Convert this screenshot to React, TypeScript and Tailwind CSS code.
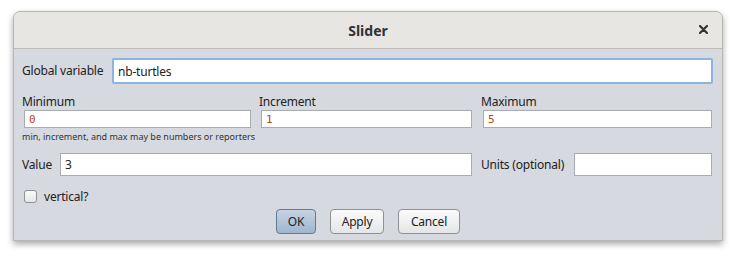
export default function App() {
  const font = { fontFamily: '"Noto Sans", "Open Sans", sans-serif' }
  const mono = '[font-family:"DejaVu_Sans_Mono",monospace]'

  return (
    <div className="w-[737px] h-[258px] bg-white pt-[11px] pl-[13px] text-[#2e3436]" style={font}>
      <div className="w-[710px] h-[230px] flex flex-col rounded-t-[7px] overflow-hidden border border-[#b6b6b3] shadow-[0_3px_6px_rgba(0,0,0,0.35)] bg-[#d6d9df]">
        {/* title bar */}
        <div className="h-[37px] shrink-0 flex items-center justify-center relative bg-[#e8e6e3] border-b border-[#c0bdb8]">
          <span className="text-[14px] font-bold text-[#2e3436]">Slider</span>
          <svg className="absolute right-[14px] top-[13px]" width="9" height="9" viewBox="0 0 9 9">
            <path d="M1 1 L8 8 M8 1 L1 8" stroke="#2e3436" strokeWidth="2.2" strokeLinecap="round" />
          </svg>
        </div>

        {/* body */}
        <div className="flex-1 flex flex-col pl-[8px] pr-[9px] text-[12px] tracking-[-0.2px] text-[#222] whitespace-nowrap">
          <div className="flex items-center mt-[9px] h-[26px]">
            <span className="w-[90px] shrink-0">Global variable</span>
            <input
              defaultValue="nb-turtles"
              className="flex-1 h-[26px] bg-white border-2 border-[#8db3de] rounded-[2px] px-[4px] text-[12px] outline-none"
            />
          </div>

          <div className="flex mt-[9px]">
            <div className="w-[230px] flex flex-col">
              <span className="leading-[17px]">Minimum</span>
              <input defaultValue="0" className={`ml-[2px] w-[227px] h-[18px] bg-white border border-[#a9abaf] px-[4px] text-[11px] tracking-normal text-[#b4470f] ${mono} outline-none`} />
            </div>
            <div className="w-[222px] ml-[7px] flex flex-col">
              <span className="leading-[17px]">Increment</span>
              <input defaultValue="1" className={`ml-[2px] w-[211px] h-[18px] bg-white border border-[#a9abaf] px-[4px] text-[11px] tracking-normal text-[#b4470f] ${mono} outline-none`} />
            </div>
            <div className="w-[232px] flex flex-col">
              <span className="leading-[17px]">Maximum</span>
              <input defaultValue="5" className={`ml-[2px] w-[229px] h-[18px] bg-white border border-[#a9abaf] px-[4px] text-[11px] tracking-normal text-[#b4470f] ${mono} outline-none`} />
            </div>
          </div>

          <div className="text-[9px] leading-[12px] mt-[3px] tracking-normal text-[#333]">min, increment, and max may be numbers or reporters</div>

          <div className="flex items-center mt-[10px] h-[23px]">
            <span className="w-[38px] shrink-0">Value</span>
            <input defaultValue="3" className="w-[412px] h-[23px] bg-white border border-[#a9abaf] px-[4px] text-[12px] outline-none" />
            <span className="ml-[9px] w-[93px] shrink-0">Units (optional)</span>
            <input className="w-[138px] h-[23px] bg-white border border-[#a9abaf] px-[4px] text-[12px] outline-none" />
          </div>

          <label className="flex items-center gap-[7px] mt-[14px] ml-[2px] h-[13px]">
            <span className="w-[13px] h-[13px] rounded-[3px] border border-[#8f9194] bg-gradient-to-b from-[#fafafa] to-[#e6e7ea]" />
            <span>vertical?</span>
          </label>

          <div className="flex justify-center gap-[14px] mt-[6px] pl-[3px] -ml-[2px]">
            <button className="w-[40px] h-[25px] rounded-[4px] border border-[#5f7894] bg-gradient-to-b from-[#c6d4e3] to-[#9fb6cd] text-[12px]">OK</button>
            <button className="w-[54px] h-[25px] rounded-[4px] border border-[#8f9194] bg-gradient-to-b from-[#fbfbfb] to-[#e4e5e8] text-[12px]">Apply</button>
            <button className="w-[62px] h-[25px] rounded-[4px] border border-[#8f9194] bg-gradient-to-b from-[#fbfbfb] to-[#e4e5e8] text-[12px]">Cancel</button>
          </div>
        </div>
      </div>
    </div>
  )
}
